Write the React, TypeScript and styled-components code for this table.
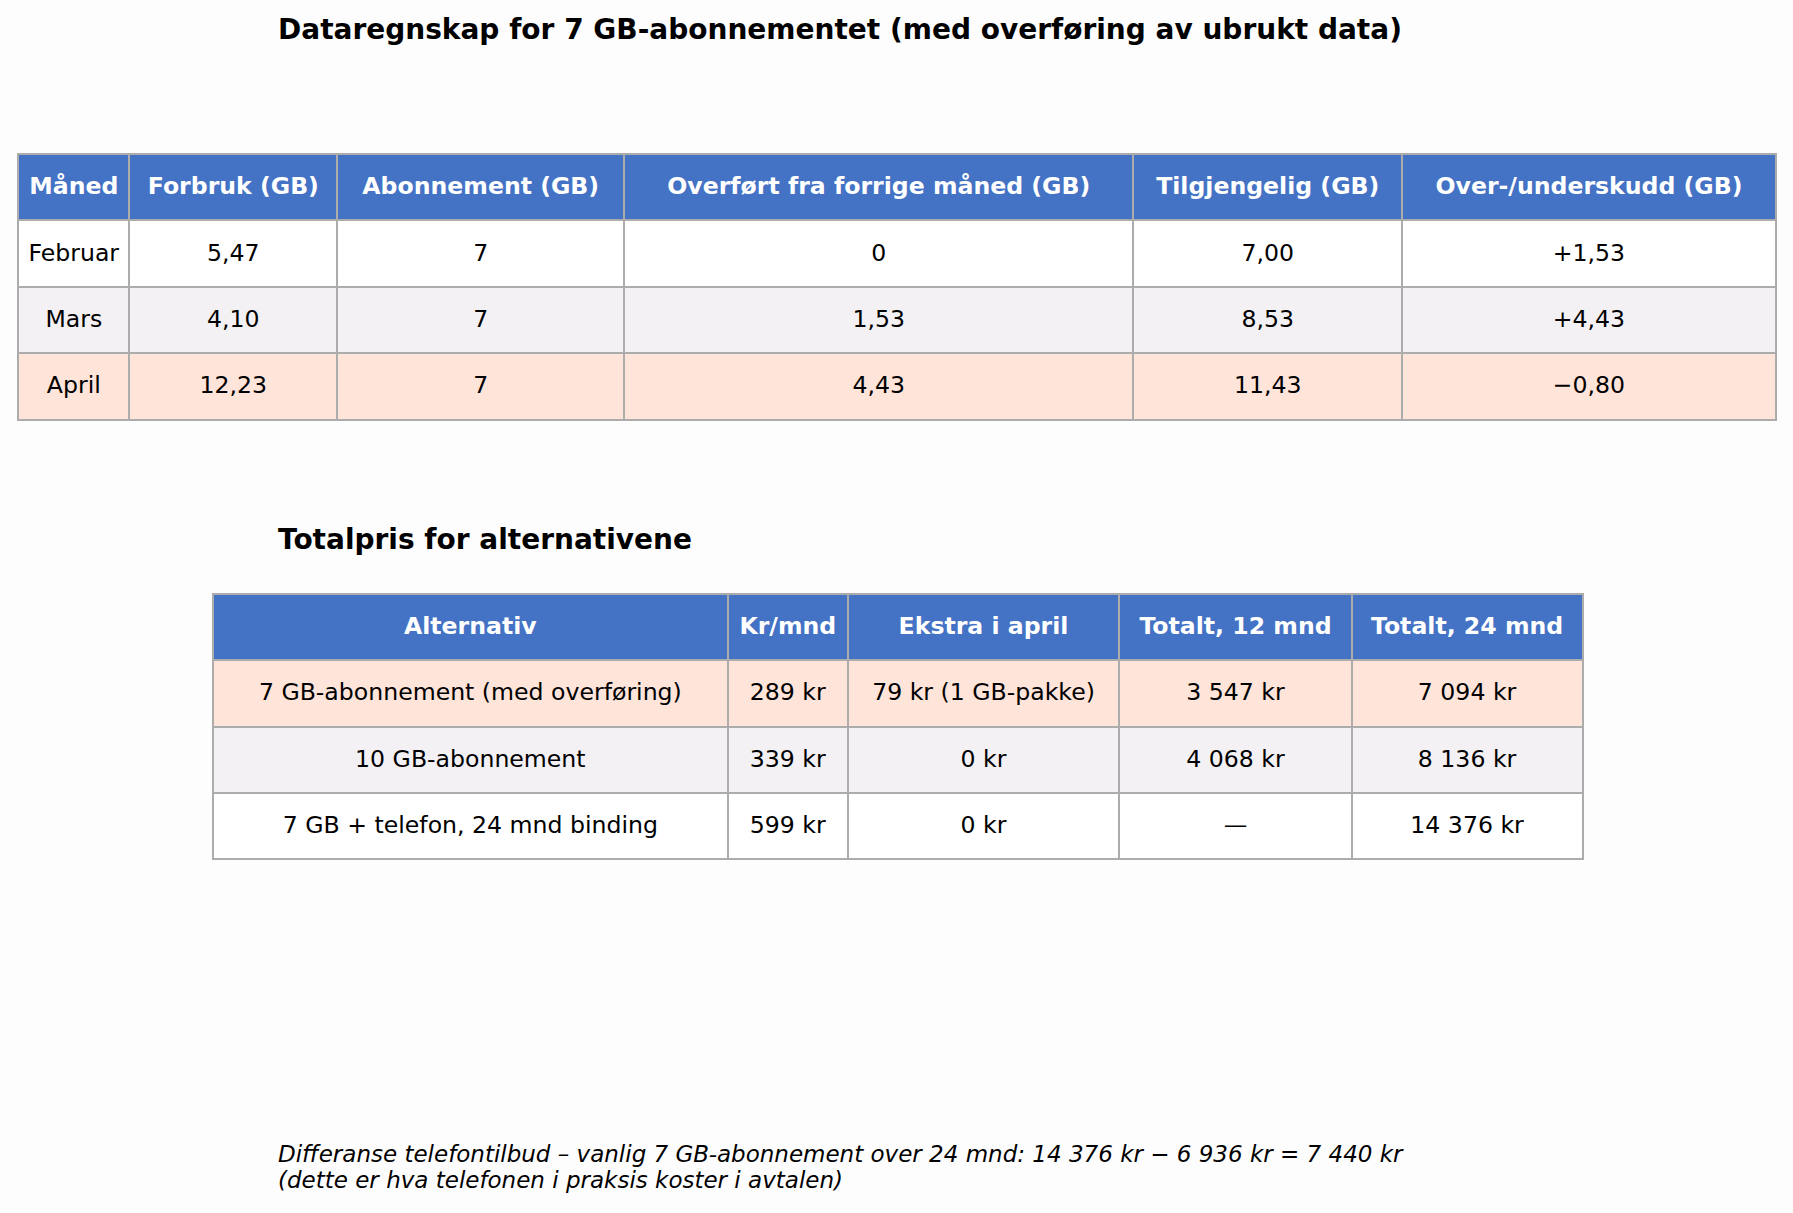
import React from "react";
import styled, { createGlobalStyle } from "styled-components";

const GlobalStyle = createGlobalStyle`
  html, body {
    margin: 0;
    padding: 0;
    background: #fefdfd;
  }
  * { box-sizing: border-box; }
`;

const Page = styled.div`
  width: 1793px;
  height: 1213px;
  background: #fefdfd;
  display: flex;
  flex-direction: column;
  align-items: flex-start;
  font-family: "DejaVu Sans", "Liberation Sans", sans-serif;
  color: #000;
  overflow: hidden;
`;

const Title = styled.h1<{ $top: number }>`
  margin: ${(p) => p.$top}px 0 0 278px;
  font-size: 28px;
  line-height: 34px;
  font-weight: bold;
  white-space: nowrap;
`;

const Grid = styled.div<{ $cols: string; $rows: string; $top: number; $left: number }>`
  margin: ${(p) => p.$top}px 0 0 ${(p) => p.$left}px;
  display: grid;
  grid-template-columns: ${(p) => p.$cols};
  grid-template-rows: ${(p) => p.$rows};
  gap: 2px;
  padding: 2px;
  background: #acacac;
`;

type Tone = "head" | "white" | "gray" | "peach";

const toneBg: Record<Tone, string> = {
  head: "#4472c4",
  white: "#ffffff",
  gray: "#f3f1f4",
  peach: "#ffe4d9",
};

const Cell = styled.div<{ $tone: Tone }>`
  display: flex;
  align-items: center;
  justify-content: center;
  padding-bottom: 2px;
  background: ${(p) => toneBg[p.$tone]};
  color: ${(p) => (p.$tone === "head" ? "#ffffff" : "#000000")};
  font-weight: ${(p) => (p.$tone === "head" ? "bold" : "normal")};
  font-size: 23.6px;
  white-space: nowrap;
`;

const Note = styled.p`
  margin: 281px 0 0 278px;
  font-style: italic;
  font-size: 23px;
  line-height: 26px;
  white-space: nowrap;
`;

const t1Head = [
  "Måned",
  "Forbruk (GB)",
  "Abonnement (GB)",
  "Overført fra forrige måned (GB)",
  "Tilgjengelig (GB)",
  "Over-/underskudd (GB)",
];

const t1Rows: { tone: Tone; cells: string[] }[] = [
  { tone: "white", cells: ["Februar", "5,47", "7", "0", "7,00", "+1,53"] },
  { tone: "gray", cells: ["Mars", "4,10", "7", "1,53", "8,53", "+4,43"] },
  { tone: "peach", cells: ["April", "12,23", "7", "4,43", "11,43", "\u22120,80"] },
];

const t2Head = ["Alternativ", "Kr/mnd", "Ekstra i april", "Totalt, 12 mnd", "Totalt, 24 mnd"];

const t2Rows: { tone: Tone; cells: string[] }[] = [
  {
    tone: "peach",
    cells: ["7 GB-abonnement (med overføring)", "289 kr", "79 kr (1 GB-pakke)", "3 547 kr", "7 094 kr"],
  },
  { tone: "gray", cells: ["10 GB-abonnement", "339 kr", "0 kr", "4 068 kr", "8 136 kr"] },
  {
    tone: "white",
    cells: ["7 GB + telefon, 24 mnd binding", "599 kr", "0 kr", "\u2014", "14 376 kr"],
  },
];

function DataTable({
  head,
  rows,
  cols,
  rowSizes,
  top,
  left,
}: {
  head: string[];
  rows: { tone: Tone; cells: string[] }[];
  cols: string;
  rowSizes: string;
  top: number;
  left: number;
}) {
  return (
    <Grid $cols={cols} $rows={rowSizes} $top={top} $left={left}>
      {head.map((h) => (
        <Cell key={h} $tone="head">
          {h}
        </Cell>
      ))}
      {rows.map((r, i) =>
        r.cells.map((c, j) => (
          <Cell key={`${i}-${j}`} $tone={r.tone}>
            {c}
          </Cell>
        ))
      )}
    </Grid>
  );
}

export default function App() {
  return (
    <>
      <GlobalStyle />
      <Page>
        <Title $top={13.4}>Dataregnskap for 7 GB-abonnementet (med overføring av ubrukt data)</Title>
        <DataTable
          head={t1Head}
          rows={t1Rows}
          cols="108.8px 206.3px 284.5px 507.5px 266.5px 372px"
          rowSizes="64px 64.7px 64.3px 64.3px"
          top={105.9}
          left={17.4}
        />
        <Title $top={102.1}>Totalpris for alternativene</Title>
        <DataTable
          head={t2Head}
          rows={t2Rows}
          cols="513.3px 117.6px 269.9px 230.1px 229px"
          rowSizes="64px 64.4px 64.6px 64px"
          top={36.6}
          left={211.7}
        />
        <Note>
          Differanse telefontilbud – vanlig 7 GB-abonnement over 24 mnd: 14 376 kr − 6 936 kr = 7 440 kr
          <br />
          (dette er hva telefonen i praksis koster i avtalen)
        </Note>
      </Page>
    </>
  );
}
